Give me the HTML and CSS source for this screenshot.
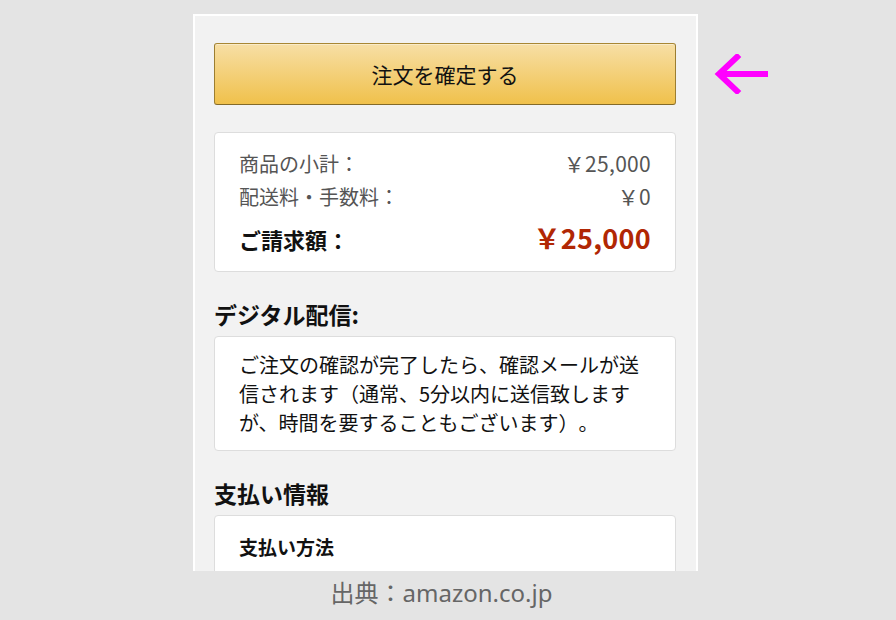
FILE: index.html
```html
<!DOCTYPE html>
<html lang="ja">
<head>
    <meta charset="UTF-8" />
    <meta name="viewport" content="width=device-width, initial-scale=1" />
    <title>注文の確認</title>
    <link rel="stylesheet" href="styles.css">
</head>
<body>
    <div class="shot">
        <div class="panel">
            <button class="place-order" type="button">注文を確定する</button>

            <div class="box summary">
                <div class="row">
                    <span>商品の小計：</span>
                    <span class="num">￥25,000</span>
                </div>
                <div class="row">
                    <span>配送料・手数料：</span>
                    <span class="num">￥0</span>
                </div>
                <div class="row total">
                    <span>ご請求額：</span>
                    <span class="num price">￥25,000</span>
                </div>
            </div>

            <h2>デジタル配信:</h2>
            <div class="box notice">
                ご注文の確認が完了したら、確認メールが送信されます（通常、5分以内に送信致しますが、時間を要することもございます）。
            </div>

            <h2>支払い情報</h2>
            <div class="box payment">
                <h3>支払い方法</h3>
            </div>
        </div>
        <p class="source">出典：amazon.co.jp</p>
    </div>

    <!-- pink marker pointing at the button -->
    <svg class="marker" width="56" height="40" viewBox="0 0 56 40">
        <path d="M4 20 H54" stroke="#ff00ff" stroke-width="6" fill="none" />
        <path d="M23 3 L5 20 L23 37" stroke="#ff00ff" stroke-width="6" fill="none" stroke-linecap="square" />
    </svg>
</body>
</html>
```

FILE: styles.css
```css
body {
    margin: 0;
    background-color: #e4e4e4;
    font-family: 'Noto Sans CJK JP', 'Noto Sans', sans-serif;
    color: #111;
    text-spacing-trim: space-all;
}

.shot {
    width: 505px;
    margin-left: 193px;
    padding-top: 14px;
}

.panel {
    height: 557px;
    box-sizing: border-box;
    overflow: hidden;
    background-color: #f2f2f2;
    border: 2px solid #fff;
    border-bottom: none;
    padding: 27px 20px 0 19px;
}

.place-order {
    display: block;
    width: 100%;
    height: 62px;
    padding: 0;
    border: 1px solid;
    border-color: #a88734 #9c7e31 #846a29;
    border-radius: 3px;
    background: linear-gradient(to bottom, #f7dfa5, #f0c14b);
    box-shadow: inset 0 1px 0 rgba(255,255,255,0.4);
    font-family: inherit;
    font-size: 21px;
    color: #111;
    cursor: pointer;
}

.box {
    background-color: #fff;
    border: 1px solid #ddd;
    border-radius: 4px;
}

.summary {
    margin-top: 27px;
    padding: 14px 24px 14px;
}

.row {
    display: flex;
    justify-content: space-between;
    align-items: baseline;
    font-size: 20px;
    line-height: 32px;
    color: #555;
}

.num {
    font-size: 21px;
    letter-spacing: 0.3px;
}

.row.total {
    margin-top: 7px;
    font-size: 22px;
    line-height: 36px;
    font-weight: bold;
    color: #111;
}

.price {
    font-size: 27px;
    font-weight: bold;
    color: #b12704;
}

h2 {
    margin: 27px 0 7px;
    font-size: 23px;
    line-height: 30px;
    font-weight: bold;
}

.notice {
    padding: 13px 24px 13px;
    font-size: 20px;
    line-height: 29px;
}

.payment {
    padding: 17px 24px 20px;
}

h3 {
    margin: 0;
    font-size: 19px;
    line-height: 28px;
    font-weight: bold;
}

.source {
    margin: 6px 0 0;
    text-align: center;
    font-family: 'Noto Sans', 'Noto Sans CJK JP', sans-serif;
    font-size: 24px;
    line-height: 32px;
    color: #666;
    padding-right: 8px;
}

.marker {
    position: absolute;
    left: 714px;
    top: 54px;
}
```
